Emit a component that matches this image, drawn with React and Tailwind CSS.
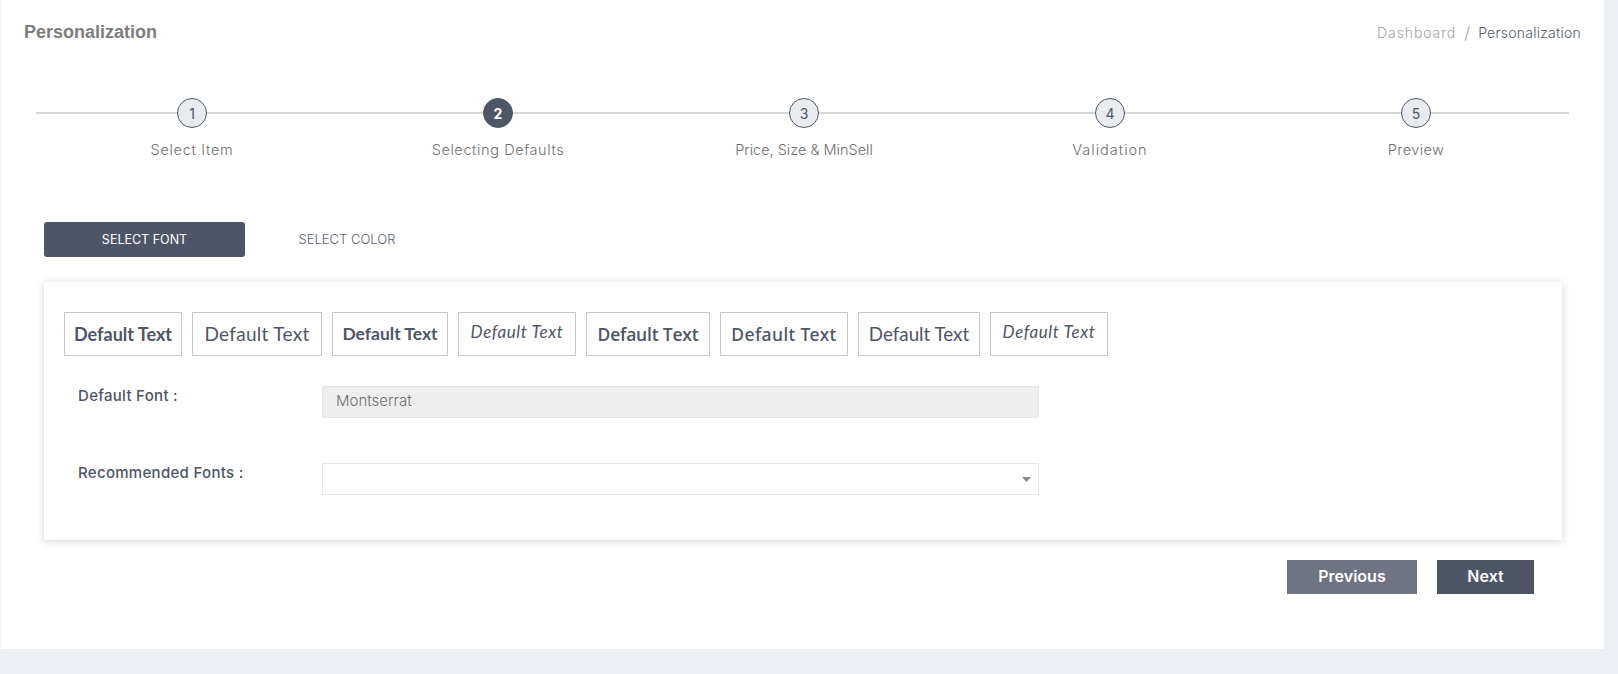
import React from "react";

const steps = [
  { n: 1, label: "Select Item", track: "tracking-[0.7px]" },
  { n: 2, label: "Selecting Defaults", active: true, track: "tracking-[0.6px]" },
  { n: 3, label: "Price, Size & MinSell", track: "tracking-[0px]" },
  { n: 4, label: "Validation", track: "tracking-[1px]" },
  { n: 5, label: "Preview", track: "tracking-[0.4px]" },
];

const hand = "font-['Lato'] italic text-[17px] tracking-[0.6px] pb-1";

const samples = [
  { w: "w-[118px]", cls: "font-['Lato'] font-bold text-[18px]" },
  { w: "w-[130px]", cls: "font-['Lato'] text-[19px] tracking-[0.3px]" },
  { w: "w-[116px]", cls: "font-['Lato'] font-bold text-[17.5px]" },
  { w: "w-[118px]", cls: hand },
  { w: "w-[124px]", cls: "font-['Open_Sans'] font-semibold text-[17.5px] tracking-[-0.2px]" },
  { w: "w-[128px]", cls: "font-['Noto_Sans'] font-medium text-[17.5px] tracking-[0.4px]" },
  { w: "w-[122px]", cls: "font-['Lato'] text-[18.8px]" },
  { w: "w-[118px]", cls: hand },
];

export default function App() {
  return (
    <div className="h-[674px] bg-[#ecf0f5] pl-px font-['Inter',sans-serif] overflow-hidden">
      <div className="w-[1603px] h-[649px] bg-white">
        <div className="flex items-center justify-between pt-[20px] pl-[23px] pr-[23px] h-[44px]">
          <h1 className="font-['Liberation_Sans'] font-bold text-[18px] text-[#7d7d7d]">Personalization</h1>
          <div className="flex items-center text-[14px] font-light mt-px">
            <span className="text-[#a3a3a3] tracking-[0.9px]">Dashboard</span>
            <span className="mx-[8px] text-[17px] leading-[20px] text-[#a3a3a3]">/</span>
            <span className="text-[#555c6b] tracking-[0.25px]">Personalization</span>
          </div>
        </div>

        <div className="relative mt-[54px] ml-[35px] w-[1533px] pl-[3px] grid grid-cols-5">
          <div className="absolute left-0 right-0 top-[14px] h-[2px] bg-[#d6d6d6]" />
          {steps.map((s) => (
            <div key={s.n} className="relative flex flex-col items-center">
              <div
                className={
                  s.active
                    ? "w-[30px] h-[30px] rounded-full bg-[#4d5566] border border-[#4d5566] text-white font-bold text-[14px] flex items-center justify-center"
                    : "w-[30px] h-[30px] rounded-full bg-[#e9ecef] border border-[#4d5566] text-[#4d5566] text-[14px] flex items-center justify-center"
                }
              >
                {s.n}
              </div>
              <div className={`mt-[12px] text-[14.5px] font-light text-[#6f6f6f] leading-[20px] ${s.track}`}>{s.label}</div>
            </div>
          ))}
        </div>

        <div className="flex items-center mt-[62px] ml-[43px]">
          <button className="w-[201px] h-[35px] pt-[1px] bg-[#4f5568] rounded-[3px] text-white text-[12.5px]">SELECT FONT</button>
          <button className="w-[204px] h-[35px] pt-[1px] text-[#5a6070] text-[13px] font-light">SELECT COLOR</button>
        </div>

        <div className="mt-[25px] ml-[43px] w-[1518px] h-[258px] bg-white shadow-[0_1px_8px_rgba(0,0,0,0.18)] pt-[30px] pl-[20px]">
          <div className="flex gap-[10px]">
            {samples.map((s, i) => (
              <div
                key={i}
                className={`${s.w} h-[44px] border border-[#c8c8c8] flex items-center justify-center text-[#4d5566] whitespace-nowrap`}
              >
                <span className={s.cls}>Default Text</span>
              </div>
            ))}
          </div>

          <div className="flex mt-[30px]">
            <label className="w-[258px] pl-[14px] text-[15px] tracking-[0.3px] font-medium text-[#4d5566] leading-[20px]">Default Font :</label>
            <div className="w-[717px] h-[32px] bg-[#eeeeee] border border-[#e6e6e6] pl-[13px] pb-[1px] flex items-center text-[15px] font-light text-[#6f6f6f]">
              Montserrat
            </div>
          </div>

          <div className="flex mt-[45px]">
            <label className="w-[258px] pl-[14px] text-[15px] tracking-[0.3px] font-medium text-[#4d5566] leading-[20px]">Recommended Fonts :</label>
            <div className="w-[717px] h-[32px] bg-white border border-[#e6e6e6] flex items-center justify-end pr-[7px]">
              <svg width="9" height="5" viewBox="0 0 9 5">
                <path d="M0 0h9L4.5 5z" fill="#888888" />
              </svg>
            </div>
          </div>
        </div>

        <div className="flex justify-end gap-[20px] mt-[20px] mr-[70px]">
          <button className="w-[130px] h-[34px] pb-[3px] bg-[#6e7481] text-white text-[16px] font-semibold">Previous</button>
          <button className="w-[97px] h-[34px] pb-[3px] bg-[#4d5566] text-white text-[16px] font-semibold">Next</button>
        </div>
      </div>
    </div>
  );
}
